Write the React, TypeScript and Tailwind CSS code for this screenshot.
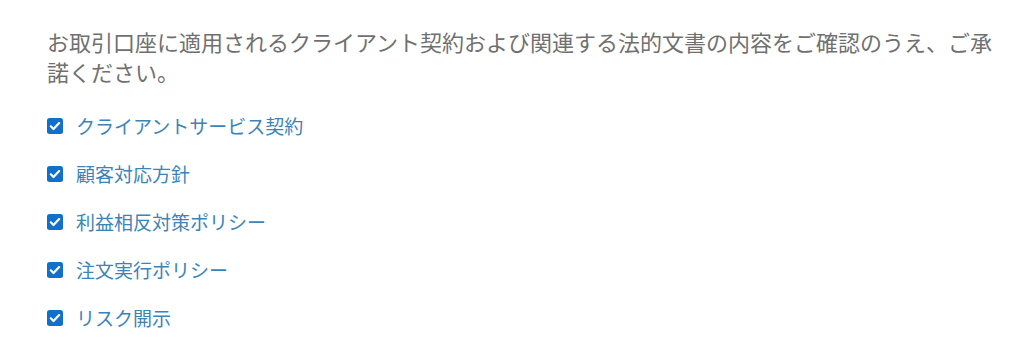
import { useState } from 'react';

const docs = [
  'クライアントサービス契約',
  '顧客対応方針',
  '利益相反対策ポリシー',
  '注文実行ポリシー',
  'リスク開示',
];

function CheckIcon() {
  return (
    <svg viewBox="0 0 16 16" className="w-4 h-4">
      <rect x="0" y="0" width="16" height="16" rx="2.5" fill="#1170c9" />
      <path d="M3.8 8.3l2.7 2.7 5.7-5.9" fill="none" stroke="#fff" strokeWidth="2.2" strokeLinecap="round" strokeLinejoin="round" />
    </svg>
  );
}

export default function App() {
  const [checked, setChecked] = useState<boolean[]>(docs.map(() => true));

  const toggle = (i: number) => {
    setChecked((prev) => prev.map((v, idx) => (idx === i ? !v : v)));
  };

  return (
    <div
      className="w-[1024px] h-[348px] bg-white pl-[47px] pr-[14px] pt-[26px] overflow-hidden"
      style={{ fontFamily: '"Noto Sans CJK JP", "Noto Sans", sans-serif' }}
    >
      <p className="text-[22px] leading-[30px] text-[#707070]">
        お取引口座に適用されるクライアント契約および関連する法的文書の内容をご確認のうえ、ご承諾ください。
      </p>
      <ul className="mt-[16px] flex flex-col">
        {docs.map((d, i) => (
          <li key={d} className="h-[48px] flex items-center gap-[13px] cursor-pointer" onClick={() => toggle(i)}>
            {checked[i] ? <CheckIcon /> : <span className="w-4 h-4 rounded-[2.5px] border-2 border-[#1170c9]" />}
            <span className="text-[19px] text-[#3c84b8]">{d}</span>
          </li>
        ))}
      </ul>
    </div>
  );
}
